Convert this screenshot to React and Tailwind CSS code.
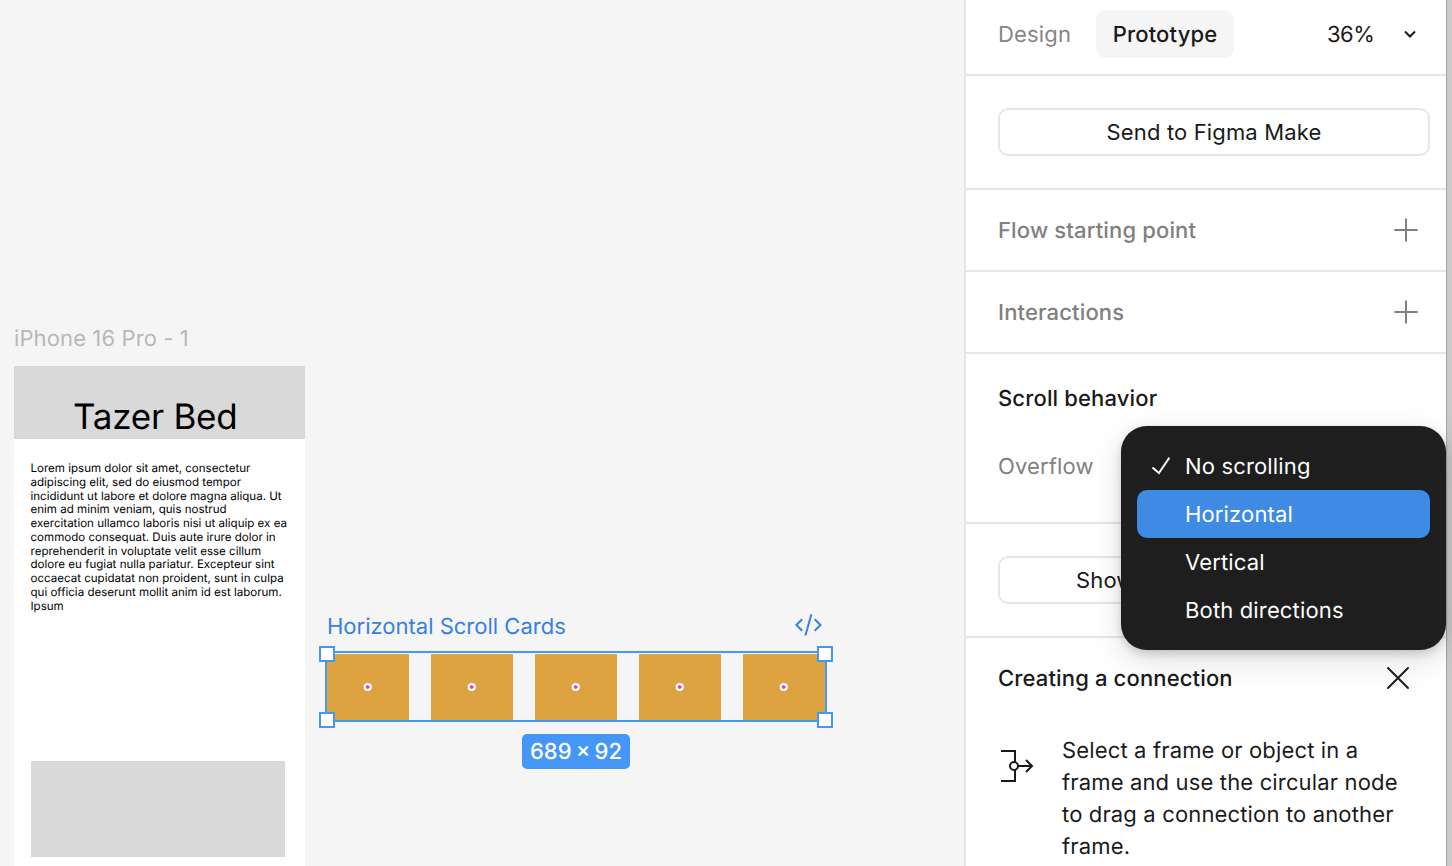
import React from 'react';

const UI = "font-['Inter',sans-serif] [text-rendering:geometricPrecision]";

const loremLines = [
  'Lorem ipsum dolor sit amet, consectetur',
  'adipiscing elit, sed do eiusmod tempor',
  'incididunt ut labore et dolore magna aliqua. Ut',
  'enim ad minim veniam, quis nostrud',
  'exercitation ullamco laboris nisi ut aliquip ex ea',
  'commodo consequat. Duis aute irure dolor in',
  'reprehenderit in voluptate velit esse cillum',
  'dolore eu fugiat nulla pariatur. Excepteur sint',
  'occaecat cupidatat non proident, sunt in culpa',
  'qui officia deserunt mollit anim id est laborum.',
  'Ipsum',
];

function PhoneFrame() {
  return (
    <div className="absolute left-[14px] top-[322px] w-[290.5px]">
      <div className="h-11 pt-px text-[22px] leading-8 tracking-[0.11px] whitespace-nowrap text-[#b8b8b8]">
        iPhone 16 Pro - 1
      </div>
      <div className="h-[520px] bg-white">
        <div className="flex h-[73px] items-end bg-[#d9d9d9] pl-[59px]">
          <h1 className="text-[35px] leading-[44px] tracking-[-0.25px] whitespace-nowrap text-black">Tazer Bed</h1>
        </div>
        <div className="flex h-[322px] flex-col pt-[23px] pl-[16.5px] text-[11.56px] text-black">
          {loremLines.map((line) => (
            <p key={line} className="h-[13.75px] leading-[13.75px] whitespace-nowrap">{line}</p>
          ))}
        </div>
        <div className="ml-[16.5px] h-[95.5px] w-[254.5px] bg-[#d9d9d9]" />
      </div>
    </div>
  );
}

function Card() {
  return (
    <div className="flex h-[66px] w-[81.6px] items-center justify-center bg-[#dca340]">
      <svg width="10" height="10" viewBox="0 0 10 10">
        <circle cx="4.7" cy="5" r="4.1" fill="#fff" />
        <path d="M4.7 2.7 7 5 4.7 7.3 2.4 5Z" fill="#ee2fc4" />
      </svg>
    </div>
  );
}

function Handle({ place }) {
  return <span className={`absolute size-4 border-2 border-[#4597f7] bg-white ${place}`} />;
}

function SelectedFrame() {
  return (
    <div className="absolute left-[325px] top-[610px] w-[502px]">
      <div className="flex h-[41px] justify-between pr-1 pl-[2px] text-[#3580e4]">
        <span className="pt-px text-[22px] leading-8 whitespace-nowrap">Horizontal Scroll Cards</span>
        <svg className="mt-[3px]" width="30" height="24" viewBox="0 0 30 24" fill="none" stroke="currentColor" strokeWidth="2">
          <path d="M9.2 6.2 3.4 12l5.8 5.8M21.7 6.2l5.8 5.8-5.8 5.8M18.4 1.2l-6 21.4" />
        </svg>
      </div>
      <div className="relative h-[71px] border-2 border-[#4597f7] pt-px">
        <div className="flex gap-[22.4px]">
          <Card /><Card /><Card /><Card /><Card />
        </div>
        <Handle place="-left-2 -top-[7px]" />
        <Handle place="-right-2 -top-[7px]" />
        <Handle place="-left-2 -bottom-2" />
        <Handle place="-right-2 -bottom-2" />
      </div>
      <div className="mt-3 flex justify-center">
        <span className="flex h-[35px] w-[108.5px] items-center justify-center rounded-[5px] bg-[#4597f7] pt-0.5 text-[22px] font-medium [word-spacing:-1.7px] whitespace-nowrap text-white">
          689 × 92
        </span>
      </div>
    </div>
  );
}

function PlusIcon() {
  return (
    <svg width="24" height="24" viewBox="0 0 24 24" stroke="#7f7f7f" strokeWidth="2">
      <path d="M12 .4v23.2M.4 12h23.2" />
    </svg>
  );
}

function SectionRow({ title }) {
  return (
    <section className="flex h-[82px] items-center justify-between border-b-2 border-[#e6e6e6] pr-7 pl-8">
      <h2 className="pt-0.5 font-medium text-[#808080]">{title}</h2>
      <PlusIcon />
    </section>
  );
}

function OutlineButton({ children }) {
  return (
    <button className="flex h-12 w-[432px] items-center justify-center rounded-[10px] border-2 border-[#e6e6e6] whitespace-nowrap">
      {children}
    </button>
  );
}

function OverflowMenu() {
  const items = ['No scrolling', 'Horizontal', 'Vertical', 'Both directions'];
  return (
    <ul className="absolute top-[426px] left-[155px] z-10 flex h-56 w-[325px] flex-col rounded-[26px] bg-[#1e1e1e] p-4 text-white shadow-[0_0_1px_rgba(0,0,0,0.15),0_10px_32px_rgba(0,0,0,0.13),0_4px_10px_rgba(0,0,0,0.15)]">
      {items.map((item) => (
        <li key={item} className={item === 'Horizontal' ? 'flex h-12 items-center rounded-[10px] bg-[#3f8ae2]' : 'flex h-12 items-center'}>
          <span className="flex w-12 justify-center">
            {item === 'No scrolling' && (
              <svg width="20" height="20" viewBox="0 0 20 20" fill="none" stroke="#fff" strokeWidth="1.9">
                <path d="m1.5 11.5 6.4 5.5L18.4 1.6" />
              </svg>
            )}
          </span>
          <span className="pt-0.5">{item}</span>
        </li>
      ))}
    </ul>
  );
}

function PrototypePanel() {
  return (
    <aside className="relative w-[482px] shrink-0 border-l-2 border-[#e6e6e6] bg-white text-[22px] leading-8 tracking-[0.15px] text-[#1a1a1a]">
      <header className="flex h-[76px] items-center border-b-2 border-[#e6e6e6] pb-1.5 pl-8">
        <span className="w-[98px] pt-0.5 text-[#858585]">Design</span>
        <span className="flex h-12 w-[138px] items-center justify-center rounded-[10px] bg-[#f5f5f5] pt-0.5 font-medium">Prototype</span>
        <span className="ml-[93px] pt-0.5 tracking-[-0.5px]">36%</span>
        <svg className="absolute left-[436px]" width="16" height="12" viewBox="0 0 16 12" fill="none" stroke="#1a1a1a" strokeWidth="2">
          <path d="m3 3.5 5 5 5-5" />
        </svg>
      </header>
      <section className="h-[114px] border-b-2 border-[#e6e6e6] pt-8 pl-8">
        <OutlineButton>Send to Figma Make</OutlineButton>
      </section>
      <SectionRow title="Flow starting point" />
      <SectionRow title="Interactions" />
      <section className="flex h-[170px] flex-col gap-9 border-b-2 border-[#e6e6e6] pt-[29px] pl-8">
        <h2 className="font-medium">Scroll behavior</h2>
        <span className="text-[#808080]">Overflow</span>
      </section>
      <section className="h-[114px] border-b-2 border-[#e6e6e6] pt-8 pl-8">
        <OutlineButton>
          <span className="w-[276px] text-left">Show prototype settings</span>
        </OutlineButton>
      </section>
      <section className="pt-[23px] pl-8">
        <div className="flex items-center justify-between pr-9">
          <h2 className="pt-0.5 font-medium">Creating a connection</h2>
          <svg width="24" height="24" viewBox="0 0 24 24" stroke="#1a1a1a" strokeWidth="1.9" strokeLinecap="round">
            <path d="m2 2 20 20M22 2 2 22" />
          </svg>
        </div>
        <div className="mt-10 flex gap-[28px]">
          <svg className="mt-[13px] shrink-0" width="36" height="36" viewBox="0 0 36 36" fill="none" stroke="#1a1a1a" strokeWidth="2">
            <path d="M3 3h14v11M3 33h14V22M20 18h14M28 12l6 6-6 6" />
            <circle cx="16" cy="18" r="4" />
          </svg>
          <p className="whitespace-nowrap">
            Select a frame or object in a<br />frame and use the circular node<br />to drag a connection to another<br />frame.
          </p>
        </div>
      </section>
      <OverflowMenu />
    </aside>
  );
}

export default function App() {
  return (
    <div className={`flex h-[866px] w-[1452px] overflow-hidden bg-[#f5f5f5] ${UI}`}>
      <main className="relative flex-1 overflow-hidden">
        <PhoneFrame />
        <SelectedFrame />
      </main>
      <PrototypePanel />
      <div className="w-1.5 shrink-0 border-l border-[#a3a3a3] bg-[#cacaca]" />
    </div>
  );
}
